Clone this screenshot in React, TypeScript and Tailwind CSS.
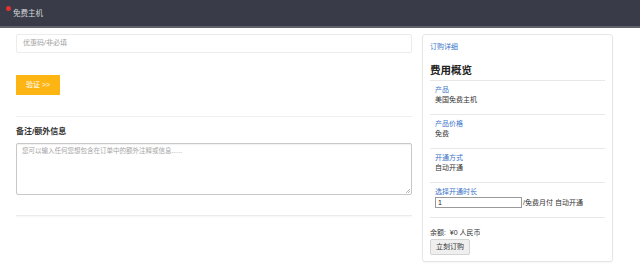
import React from "react";

const font = { fontFamily: '"Liberation Sans", "Noto Sans CJK SC", sans-serif' };

function Section({ label, children }: { label: string; children: React.ReactNode }) {
  return (
    <div className="border-t border-[#e8e8e8] pt-[4px] pb-[9px] pl-[5px] text-[7px] leading-[10px]">
      <div className="text-[7px] leading-[10px] text-[#3b73c9]">{label}</div>
      {children}
    </div>
  );
}

export default function App() {
  return (
    <div className="w-[640px] h-[267px] bg-white overflow-hidden" style={font}>
      <div className="h-[28px] bg-[#393c48] border-b-[2px] border-[#5f616b] flex items-center pl-[6px]">
        <span className="w-[5px] h-[5px] rounded-full bg-[#e0332f] self-start mt-[6px]"></span>
        <span className="text-[7.5px] text-[#d4d5d9] ml-[2px] mt-[1px]">免费主机</span>
      </div>
      <div className="flex pl-[16px] pt-[6px] gap-[10px]">
        <div className="w-[396px] flex flex-col">
          <div className="h-[19px] border border-[#ececec] rounded-[2px] flex items-center pl-[6px]">
            <span className="text-[7px] text-[#a0a0a0]">优惠码/非必填</span>
          </div>
          <div className="mt-[22px] w-[44px] h-[20px] bg-[#fdb514] flex items-center justify-center">
            <span className="text-[7px] text-white">验证 &gt;&gt;</span>
          </div>
          <div className="mt-[21px] h-px bg-[#efefef]"></div>
          <div className="mt-[10px] text-[8px] leading-[10px] font-bold text-[#333]">备注/额外信息</div>
          <div className="mt-[6px] h-[52px] border border-[#c8c8c8] rounded-[2px] shadow-[inset_0_1px_1px_rgba(0,0,0,0.06)] pl-[5px] pt-[2px] relative text-[6.5px] leading-[9px] text-[#a5a5a5]">
            您可以输入任何您想包含在订单中的额外注释或信息......
            <svg className="absolute right-[1px] bottom-[1px]" width="5" height="5" viewBox="0 0 5 5">
              <path d="M5 1 L1 5 M5 3 L3 5" stroke="#aaa" strokeWidth="0.8" />
            </svg>
          </div>
          <div className="mt-[20px] h-px bg-[#ececec] shadow-[0_1px_2px_rgba(0,0,0,0.06)]"></div>
        </div>
        <div className="w-[191px] h-[228px] border border-[#e6e6e6] rounded-[3px] shadow-[0_1px_2px_rgba(0,0,0,0.04)] px-[7px] pt-[7px]">
          <div className="text-[7px] leading-[10px] text-[#3b73c9]">订购详细</div>
          <div className="mt-[11px] mb-[3px] text-[10.5px] leading-[14px] font-bold text-[#222]">费用概览</div>
          <Section label="产品">
            <div className="text-[7px] leading-[10px] text-[#333]">美国免费主机</div>
          </Section>
          <Section label="产品价格">
            <div className="text-[7px] leading-[10px] text-[#333]">免费</div>
          </Section>
          <Section label="开通方式">
            <div className="text-[7px] leading-[10px] text-[#333]">自动开通</div>
          </Section>
          <Section label="选择开通时长">
            <div className="flex items-center">
              <div className="w-[87px] h-[11px] border border-[#9a9a9a] flex items-center pl-[2px]">
                <span className="text-[7px] text-[#222]">1</span>
              </div>
              <span className="text-[7px] text-[#333] ml-[1px]">/免费月付 自动开通</span>
            </div>
          </Section>
          <div className="border-t border-[#e8e8e8] pt-[10px]">
            <div className="text-[7px] leading-[10px] text-[#333]">余额:&nbsp; ¥0 人民币</div>
            <div className="mt-[1px] w-[40px] h-[16px] bg-[#efefef] border border-[#d4d4d4] rounded-[2px] flex items-center justify-center">
              <span className="text-[7px] text-[#333]">立刻订购</span>
            </div>
          </div>
        </div>
      </div>
    </div>
  );
}
